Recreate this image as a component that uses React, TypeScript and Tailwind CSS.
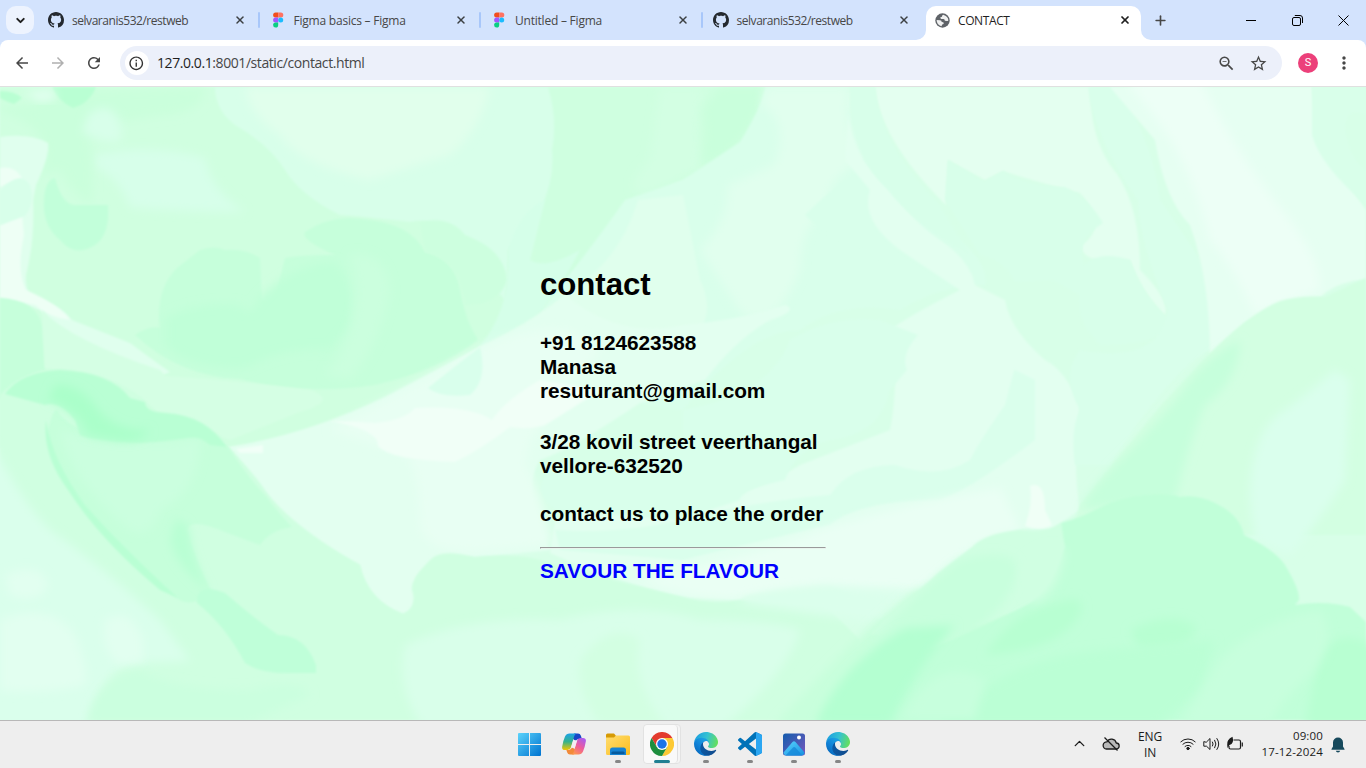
import React from "react";
import { MdArrowBack, MdArrowForward, MdRefresh, MdStarBorder, MdMoreVert, MdZoomOut, MdInfoOutline } from "react-icons/md";
import { ChevronDown, ChevronUp, Plus, X } from "lucide-react";

function GithubMark() {
  return (
    <svg viewBox="0 0 16 16" className="size-4" fill="#24292f">
      <path d="M8 0C3.58 0 0 3.58 0 8c0 3.54 2.29 6.53 5.47 7.59.4.07.55-.17.55-.38 0-.19-.01-.82-.01-1.49-2.01.37-2.53-.49-2.69-.94-.09-.23-.48-.94-.82-1.13-.28-.15-.68-.52-.01-.53.63-.01 1.08.58 1.23.82.72 1.21 1.87.87 2.33.66.07-.52.28-.87.51-1.07-1.78-.2-3.64-.89-3.64-3.95 0-.87.31-1.59.82-2.15-.08-.2-.36-1.02.08-2.12 0 0 .67-.21 2.2.82.64-.18 1.32-.27 2-.27s1.36.09 2 .27c1.53-1.04 2.2-.82 2.2-.82.44 1.1.16 1.92.08 2.12.51.56.82 1.27.82 2.15 0 3.07-1.87 3.75-3.65 3.95.29.25.54.73.54 1.48 0 1.07-.01 1.93-.01 2.2 0 .21.15.46.55.38A8.01 8.01 0 0 0 16 8c0-4.42-3.58-8-8-8z" />
    </svg>
  );
}

function FigmaMark() {
  return (
    <svg viewBox="0 0 16 16" className="size-4">
      <path d="M8.2 .5H5.6a2.5 2.5 0 0 0 0 5h2.6z" fill="#f24e1e" />
      <path d="M8.2 .5h2.6a2.5 2.5 0 0 1 0 5H8.2z" fill="#ff7262" />
      <path d="M8.2 5.5H5.6a2.5 2.5 0 0 0 0 5h2.6z" fill="#a259ff" />
      <circle cx="10.7" cy="8" r="2.5" fill="#1abcfe" />
      <path d="M5.6 10.5h2.6V13a2.55 2.55 0 1 1-2.6-2.5z" fill="#0acf83" />
    </svg>
  );
}

function GlobeMark() {
  return (
    <svg width="15" height="15" viewBox="0 0 15 15" className="ml-[8.5px]">
      <circle cx="7.500" cy="7.500" r="7.200" fill="#5f6368" />
      <path d="M8.200 1.700Q6.800 2.400 7 3.800L5.400 4.300Q5 5.700 6.300 5.900L8.500 6q1.400.3 1.300 1.800l1.900.3q1 .1 1.700-.7Q13.200 3.200 8.200 1.700z" fill="#fff" opacity=".9" />
      <path d="M1.600 7.100L5 7.300q1.800.3 1.700 1.700l1.500.3q.9.600.3 1.800l-1.300.4q-.2 1.200-.9 1.700Q1.800 12 1.600 7.100z" fill="#fff" opacity=".9" />
    </svg>
  );
}

const tabs = [
  { title: "selvaranis532/restweb", icon: "github" },
  { title: "Figma basics – Figma", icon: "figma" },
  { title: "Untitled – Figma", icon: "figma" },
  { title: "selvaranis532/restweb", icon: "github" },
];

function TabStrip() {
  return (
    <div className="flex h-10 bg-[#d3e3fd] text-[12px] text-[#474747]">
      <div className="mt-1.5 ml-1.5 flex size-7 items-center justify-center rounded-[10px] bg-[#edf3fe]">
        <ChevronDown size={13} strokeWidth={3.6} color="#1f1f1f" />
      </div>
      <div className="ml-[4px] flex">
        {tabs.map((t, i) => (
          <div key={i} className="relative flex w-[221.5px] items-center pl-2.5">
            {t.icon === "github" ? <GithubMark /> : <FigmaMark />}
            <span className={t.icon === "github" ? "mt-px ml-2 w-[160px] tracking-[-0.46px] whitespace-nowrap" : "mt-px ml-2 w-[160px] tracking-[-0.22px] whitespace-nowrap"}>{t.title}</span>
            <X size={12} strokeWidth={3} className="ml-[1.5px]" color="#3c4043" />
            {i < 3 && <span className="absolute top-3 right-0 h-4 w-[2px] rounded-full bg-[#a8c7fa]" />}
          </div>
        ))}
      </div>
      <div className="relative mt-1.5 ml-[2px] flex w-[215px] items-center rounded-t-[10px] bg-white pb-1.5 text-[#1f1f1f]">
        <svg className="absolute bottom-0 -left-2.5" width="10" height="10"><path d="M10 0v10H0A10 10 0 0 0 10 0z" fill="#fff" /></svg>
        <svg className="absolute -right-2.5 bottom-0" width="10" height="10"><path d="M0 0v10h10A10 10 0 0 1 0 0z" fill="#fff" /></svg>
        <GlobeMark />
        <span className="mt-px ml-[8.5px] w-[161px] tracking-[-0.4px]">CONTACT</span>
        <X size={12} strokeWidth={3.4} color="#1f1f1f" />
      </div>
      <Plus size={15} strokeWidth={2.6} className="mt-[12.5px] ml-[12px]" color="#474747" />
      <div className="mr-[17px] ml-auto flex items-center gap-[36px] text-black">
        <span className="h-px w-[10px] bg-black" />
        <svg width="11" height="11" viewBox="0 0 11 11" fill="none" stroke="black" className="-mr-px">
          <rect x="0.5" y="2.5" width="8" height="8" rx="1.5" />
          <path d="M2.8.5H8a2.5 2.5 0 0 1 2.5 2.5v5" />
        </svg>
        <svg width="11" height="11" viewBox="0 0 11 11" fill="none" stroke="black"><path d="M.5.5l10 10M10.5.5l-10 10" /></svg>
      </div>
    </div>
  );
}

function Toolbar() {
  return (
    <div className="h-[47px] bg-[#d3e3fd]">
      <div className="flex h-[47px] items-center rounded-t-[8px] border-b border-[#e0e0e0] bg-white text-[#474747]">
        <MdArrowBack size={18} className="ml-[13px]" />
        <MdArrowForward size={18} className="ml-[18px]" color="#b0b0b0" />
        <MdRefresh size={18} className="ml-[18px]" />
        <div className="ml-[17px] flex h-[34px] w-[1162px] items-center rounded-full bg-[#ecf0fa]">
          <div className="ml-[4.5px] flex size-6 items-center justify-center rounded-full bg-white">
            <MdInfoOutline size={16.500} color="#333" />
          </div>
          <span className="-mt-px ml-[8.5px] text-[14px] tracking-[-0.42px] text-[#474747]">
            <span className="text-[#1f1f1f]">127.0.0.1</span>:8001/static/contact.html
          </span>
          <MdZoomOut size={19} className="ml-auto" />
          <MdStarBorder size={19} className="mr-[14.5px] ml-[13px]" />
        </div>
        <div className="ml-4 flex size-5 items-center justify-center rounded-full bg-[#ec407a] font-['Roboto',sans-serif] text-[11px] text-white">S</div>
        <MdMoreVert size={20} className="ml-[16px]" />
      </div>
    </div>
  );
}

type Wash = [fill: string, d: string, soft?: boolean];

const washes: Wash[] = [
  ["#d0ffe0", "M0 87H560V390L230 448H0Z"],
  ["#d7ffea", "M95 155Q150 143 205 158Q210 190 245 212Q180 212 130 207Q120 178 95 167Z", true],
  ["#caffdc", "M0 105Q40 108 60 90L205 87Q205 110 170 115Q100 120 90 140Q95 190 90 205Q70 190 60 170L40 175Q60 130 0 112Z", true],
  ["#d8ffea", "M88 115Q105 100 118 117Q125 135 118 142Q100 142 82 133Z", true],
  ["#d8ffea", "M215 87H560V200Q530 215 508 250Q508 275 505 300L460 250Q440 215 410 222Q350 215 340 215Q300 195 285 170Q270 145 235 125Q215 110 215 87Z"],
  ["#e1ffec", "M245 87H490Q480 130 450 155Q400 170 370 180Q300 165 280 135Q250 115 245 87Z", true],
  ["#c6ffdb", "M177 268L200 250Q215 245 225 250Q245 248 260 258L262 300Q270 305 275 298L285 258Q300 255 335 255Q300 240 305 232Q330 215 360 219Q410 222 425 252Q455 258 460 290Q465 320 478 340Q440 370 375 385Q300 396 240 379Q180 377 135 335Q150 325 160 328Q155 290 177 268Z"],
  ["#cdffdf", "M420 222Q450 215 465 235Q505 250 507 280Q500 305 465 305Q460 260 425 252Z"],
  ["#c0ffd8", "M165 318Q200 300 240 305Q250 320 258 300Q290 265 335 262Q358 285 350 325L330 350Q290 345 245 368Q190 370 165 345Z", true],
  ["#cbffde", "M350 255Q385 250 390 290Q380 345 350 380L325 375Q370 320 350 255Z", true],
  ["#c2ffda", "M44 200Q45 180 55 178Q62 205 75 205L108 205Q110 235 95 245Q75 258 60 240Q42 225 44 200Z"],
  ["#b9ffd3", "M52 87H96Q90 103 73 108Q57 100 52 87Z M0 91Q15 91 22 98L14 104Q3 100 0 98Z"],
  ["#e2fff0", "M25 92L52 90L57 99L40 102Z", true],
  ["#e0ffee", "M0 137Q30 133 48 143Q50 155 36 185L33 200Q35 240 26 275Q25 295 35 298Q60 305 72 320L130 343Q150 358 170 372L163 375Q120 362 60 335L40 310Q20 302 0 298Z"],
  ["#eefff5", "M0 168Q15 165 22 178L0 187Z M0 225L22 215L24 235Q16 270 26 290Q60 305 70 320Q50 318 35 305L0 298Z"],
  ["#d8ffea", "M0 190Q20 170 30 185Q36 203 25 216L0 225Z"],
  ["#c6ffdb", "M0 298Q36 300 42 325L45 370Q20 375 5 395L0 400Z"],
  ["#d5ffe4", "M42 310Q70 340 160 370Q170 380 155 375Q230 380 310 390Q340 400 300 412L230 440L160 414Q120 375 45 368Z"],
  ["#cfffe0", "M548 87H766Q762 120 740 145Q720 165 683 180Q645 193 640 225Q600 240 570 275Q550 300 532 280Q537 240 540 210Q555 180 552 150Q558 120 548 87Z"],
  ["#d3ffe3", "M660 87H705Q690 130 705 165Q670 185 645 195Q620 190 650 160Z", true],
  ["#c9ffdc", "M720 87H766Q755 130 725 155L700 166Q709 130 702 110Z", true],
  ["#d5ffe9", "M545 200Q520 210 508 250Q512 310 478 348L530 325Q560 290 580 250Q545 270 530 260Z"],
  ["#d9ffeb", "M683 180L740 142Q760 110 766 87H848Q850 160 900 190Q940 225 946 230Q990 260 985 285Q940 285 900 310Q840 300 800 330Q750 330 683 410Q600 405 530 325Q590 250 625 200Z"],
  ["#e1ffee", "M766 87H850Q840 125 865 160Q820 180 830 210Q800 220 800 270Q770 340 740 310L700 250Q730 220 728 185L775 165Q790 120 762 105Z", true],
  ["#d9ffeb", "M805 215Q840 180 862 170Q870 205 880 225Q920 255 910 262Q880 265 860 245Q830 240 805 215Z"],
  ["#e0ffed", "M480 347Q535 320 567 293Q620 262 638 200L683 195L700 280Q720 320 683 350L560 400H390Z"],
  ["#e3fff0", "M228 447Q305 435 385 397L480 347Q530 325 565 295Q620 340 683 325Q740 320 785 305Q800 310 770 320Q735 340 705 380L640 403Q570 450 540 460Q520 490 550 550L490 556Q420 560 415 580Q418 608 403 614Q365 600 360 565Q320 545 290 525Z"],
  ["#e8fff3", "M480 348Q560 310 600 350L560 400L530 440L525 465Q545 500 552 545L470 552Q420 550 420 520Q420 460 400 452L330 430Z", true],
  ["#d9ffec", "M480 347Q488 380 470 395Q440 398 428 388Q450 370 480 347Z"],
  ["#f1fff7", "M330 421Q355 421 375 423Q405 420 415 408Q470 405 492 420Q505 400 540 380L600 390Q570 410 545 425Q530 430 510 427Q480 450 455 462Q390 460 378 446Q380 430 330 421Z M236 449L263 445V453L240 453Z"],
  ["#e3fff0", "M850 87Q842 120 863 160Q910 220 940 240Q970 260 975 285L1005 300Q1010 330 1045 360Q1065 370 1080 405Q1072 465 1080 510L1050 530Q1000 520 960 565L925 600L880 620Q850 590 825 583Q745 590 740 600L683 597Q610 580 550 553L555 520Q620 490 683 510Q760 490 800 465L890 430Q900 380 890 330Q910 315 960 290L900 250Q860 220 870 190L845 160Z"],
  ["#d9ffeb", "M683 410Q770 395 790 340Q830 315 880 320L918 335Q900 355 907 370L890 390Q880 435 830 440Q795 450 785 480Q740 490 740 500L680 520L555 510Q530 490 550 470Q620 465 683 440Z"],
  ["#daffec", "M555 530Q630 535 700 515Q770 500 830 495Q850 465 895 465Q940 480 970 460Q980 440 1005 405Q1015 365 1015 370L1035 380V440Q970 490 940 500Q860 500 830 525Q720 550 683 560L560 550Z"],
  ["#eafff4", "M820 530Q920 500 1000 488L1020 530Q985 535 955 560L920 590Q830 585 735 598Q680 597 640 580Q760 555 820 530Z", true],
  ["#f0fff6", "M1030 486Q1045 480 1045 510L1052 525Q1040 532 1025 526Q1033 505 1030 486Z"],
  ["#e4fff0", "M875 87H1090Q1090 135 1110 165Q1140 200 1140 270Q1170 300 1165 315Q1140 290 1130 260Q1080 265 1082 245Q1110 225 1080 193Q1030 180 1003 171L985 180L948 160L946 205Q880 140 875 87Z"],
  ["#d8ffea", "M948 160L984 182L1003 171Q1020 185 1065 187Q1090 200 1103 223Q1075 240 1084 265Q1100 250 1130 260Q1145 300 1168 318Q1170 345 1100 345Q1075 320 1080 295L1053 280L1015 282Q1005 260 980 255L945 200Z"],
  ["#d8ffea", "M850 87H875Q880 145 940 205L970 255Q910 220 890 190Q850 160 850 87Z"],
  ["#d9ffeb", "M1088 87H1120Q1155 150 1160 200L1200 260Q1212 300 1210 350Q1170 370 1110 465H1075Q1070 430 1080 410Q1060 375 1080 350Q1160 365 1168 310Q1140 245 1138 200Q1095 140 1088 87Z"],
  ["#e6fff2", "M1110 87H1312Q1315 140 1366 210V280Q1340 280 1320 297Q1290 300 1245 323L1210 357Q1210 280 1190 225Q1165 200 1155 140Z"],
  ["#d9ffea", "M1312 87H1366V115Q1345 105 1345 130Q1350 160 1366 170V205Q1320 165 1312 135Z"],
  ["#edfff6", "M1130 80H1200Q1240 160 1290 220Q1320 260 1320 290L1255 315Q1230 260 1210 240Q1190 150 1130 87Z", true],
  ["#d3ffe2", "M1366 278Q1350 285 1325 297Q1300 295 1280 301Q1250 313 1210 353Q1185 380 1163 403Q1120 455 1080 505L1070 535H1366Z"],
  ["#c6ffdc", "M1240 340Q1210 355 1190 380Q1170 410 1120 460Q1090 490 1080 510L1175 500Q1190 440 1205 405Q1240 380 1240 340Z", true],
  ["#daffed", "M1335 370Q1300 400 1285 410Q1250 430 1250 500L1255 540L1290 555Q1320 520 1345 480L1350 380Z", true],
  ["#d0ffe1", "M0 395Q20 372 60 369Q110 372 145 400Q150 412 165 413Q205 415 228 446Q255 475 265 490Q290 525 360 565Q368 600 403 614Q418 608 412 590Q410 580 430 560Q440 548 475 557Q520 552 550 563Q610 580 683 597Q710 605 740 600Q770 605 825 605L860 640L810 720H0Z"],
  ["#dbffec", "M740 600Q770 590 825 585Q870 590 910 590L875 622Q820 615 740 603Z", true],
  ["#d9ffea", "M405 645Q470 615 560 620Q640 600 700 620Q770 620 800 630Q790 670 720 730H425Q395 690 405 645Z", true],
  ["#d3ffe2", "M580 660Q610 620 640 640Q630 680 665 725H600Q575 690 580 660Z", true],
  ["#daffec", "M-10 440Q20 500 50 530Q100 565 160 620L190 661L135 663Q105 665 85 730H-10Z", true],
  ["#e2fff0", "M0 620Q50 600 75 635Q90 675 85 685Q40 695 0 690Z M105 620Q130 605 143 640V662L120 665Q100 650 105 620Z M5 575Q40 560 48 585Q40 605 10 595Z", true],
  ["#c6ffdb", "M48 430Q55 400 60 415Q85 440 140 442L195 437Q215 440 228 447Q250 480 265 495Q280 515 292 527Q270 530 260 545L225 532Q190 517 187 530Q195 560 212 592Q190 610 175 597Q110 550 80 500Q50 470 48 430Z"],
  ["#cbffdf", "M60 430Q100 445 200 440Q200 490 160 510Q150 540 130 530Q70 480 60 430Z", true],
  ["#b9ffd4", "M5 394Q20 372 60 370Q110 372 130 398L145 402Q145 412 165 413Q205 415 227 447L210 445Q200 436 190 438Q160 442 140 443Q90 440 80 435L75 420Q60 400 45 405Z"],
  ["#abffca", "M55 385Q80 382 100 412Q120 432 150 430Q140 445 110 439L88 435L80 420Q60 402 48 400Z", true],
  ["#b9ffd4", "M46 420Q52 460 85 505Q120 545 178 598L160 590Q100 540 68 490Q42 455 46 420Z"],
  ["#b9ffd4", "M175 520Q190 520 190 540Q195 570 210 592Q175 565 170 540Z", true],
  ["#bfffd9", "M197 598Q200 583 225 593Q250 615 278 635Q305 635 316 665V673L285 673Q260 673 245 663Q225 625 197 603Z"],
  ["#cbffdf", "M88 722Q95 680 140 670Q170 690 250 690Q300 677 310 695L250 722Z", true],
  ["#c8ffdc", "M775 725Q850 640 915 590L1060 600V725Z", true],
  ["#d0ffe2", "M883 620Q920 590 938 573Q955 560 972 547Q985 533 1020 530Q1045 534 1061 523L1075 560L1045 600L980 625Q920 635 870 635Z"],
  ["#c8ffdd", "M870 640Q920 590 960 560Q1015 545 1018 570Q1010 610 960 640Q900 650 860 680Z", true],
  ["#c1ffd9", "M1061 523Q1080 518 1099 508Q1120 497 1146 495Q1170 493 1180 497Q1197 494 1215 503Q1240 515 1244 535Q1275 550 1285 565Q1300 590 1299 600L1295 605Q1325 600 1350 607L1366 622V720H860Q880 680 905 660Q1000 620 1023 607Q1050 595 1065 547Z"],
  ["#b4ffd1", "M815 725Q840 665 905 628L955 625Q915 670 890 725Z", true],
  ["#b8ffd2", "M985 655Q1010 615 1050 605Q1090 590 1080 615Q1060 650 985 655Z M1130 630Q1170 610 1195 625Q1200 650 1140 650Z M1320 650Q1350 625 1375 650V725H1305Z", true],
  ["#bbffd5", "M940 725Q1000 660 1100 650L1215 640L1200 690L1160 725Z", true],
  ["#c7ffdd", "M920 690Q950 660 985 680L975 720H900Z M1220 660Q1260 620 1320 610Q1340 640 1310 675Q1280 700 1270 725H1180Z", true],
  ["#d0ffe2", "M1020 565Q1045 540 1065 550Q1060 590 1035 603Q1020 595 1020 565Z", true],
];

function WatercolorBackdrop() {
  return (
    <svg className="absolute inset-0" width="1366" height="633" viewBox="0 87 1366 633">
      <defs>
        <filter id="crisp"><feGaussianBlur stdDeviation="1" /></filter>
        <filter id="soft" x="-20%" y="-20%" width="140%" height="140%"><feGaussianBlur stdDeviation="5" /></filter>
      </defs>
      <rect y="87" width="1366" height="633" fill="#d8ffe8" />
      {washes.map(([fill, d, soft], i) => <path key={i} fill={fill} d={d} filter={soft ? "url(#soft)" : "url(#crisp)"} />)}
    </svg>
  );
}

function ContactPage() {
  return (
    <main className="relative flex h-[633px] justify-center overflow-hidden">
      <WatercolorBackdrop />
      <div className="relative w-[286px] pt-[180px] text-[20.8px] leading-[24px] font-bold tracking-[-0.035px] whitespace-nowrap text-black">
        <h1 className="text-[31.2px] leading-[36px]">contact</h1>
        <p className="mt-[28px]">+91 8124623588<br />Manasa<br />resuturant@gmail.com</p>
        <p className="mt-[27px]">3/28 kovil street veerthangal<br />vellore-632520</p>
        <p className="mt-[24px]">contact us to place the order</p>
        <hr className="mt-[21px] h-[2px] border-t border-r border-b border-l border-t-[#9a9a9a] border-r-[#eee] border-b-[#e9f5ee] border-l-[#9a9a9a]" />
        <p className="mt-[10px] text-[#0000ff]">SAVOUR THE FLAVOUR</p>
      </div>
    </main>
  );
}

function WindowsLogo() {
  return (
    <svg width="24" height="24" viewBox="0 0 24 24">
      <defs><linearGradient id="win" x1="0" y1="0" x2="1" y2="1"><stop stopColor="#5bd3fb" /><stop offset="1" stopColor="#0073d0" /></linearGradient></defs>
      <path fill="url(#win)" d="M0 2Q0 1 1 1H11V12H0zM12 1H22Q23 1 23 2V12H12zM0 13H11V24H1Q0 24 0 23zM12 13H23V23Q23 24 22 24H12z" />
    </svg>
  );
}

function CopilotLogo() {
  return (
    <svg width="24" height="24" viewBox="0 0 24 24">
      <defs>
        <linearGradient id="cp1" x1="0" y1="0" x2="0" y2="1"><stop stopColor="#1da2e8" /><stop offset=".5" stopColor="#35b28c" /><stop offset="1" stopColor="#f2c500" /></linearGradient>
        <linearGradient id="cp2" x1=".8" y1="0" x2=".2" y2="1"><stop stopColor="#a95cf0" /><stop offset=".5" stopColor="#ee5c9b" /><stop offset="1" stopColor="#ff9a4b" /></linearGradient>
      </defs>
      <path d="M12 1.5h4q2.2 0 2.9 2.2l1 3.3h-3q-2.3 0-3 2.2L10 6z" fill="#1746c8" />
      <path d="M7.5 1.5h7q-1.7.7-2.3 2.7L9 15.2q-.8 2.8-3.4 2.8H3Q-.4 18 .2 14.400Q1 9 3 4.500 4.300 1.500 7.500 1.500z" fill="url(#cp1)" />
      <path d="M12 22.500H8q-2.200 0-2.900-2.200L4.400 18h2.400q2.400 0 3.200-2.800L14 18z" fill="#f28a39" />
      <path d="M16.500 22.500h-7q1.700-.7 2.300-2.700L15 8.800Q15.800 6 18.400 6H21q3.400 0 2.800 3.600-.8 5.400-2.800 9.900-1.300 3-4.500 3z" fill="url(#cp2)" />
      <path d="M11.200 8.200h3.900l-2.300 7.600H9z" fill="#f5edf4" />
    </svg>
  );
}

function FolderLogo() {
  return (
    <svg width="24" height="24" viewBox="0 0 24 24">
      <defs><linearGradient id="fold" x1="0" y1="0" x2="1" y2="1"><stop stopColor="#ffdd70" /><stop offset="1" stopColor="#fbbd1e" /></linearGradient></defs>
      <path d="M0 3Q0 1.500 1.500 1.500H8l2 2.200V7H0z" fill="#d69a05" />
      <path d="M0 5.500h8l2-2h12.500Q24 3.500 24 5v17Q24 23 22.500 23h-21Q0 23 0 21.500z" fill="url(#fold)" />
      <path d="M4 23v-5q0-2.500 2.500-2.500h11Q20 15.500 20 18v5z" fill="#1683d2" />
      <path d="M7 19.500h10q1 0 1.500 1V22H5.500v-1.500q.5-1 1.500-1z" fill="#075b9d" />
    </svg>
  );
}

function ChromeLogo() {
  return (
    <svg width="24" height="24" viewBox="0 0 48 48">
      <path d="M3.200 12A24 24 0 0 1 44.800 12H24L13.600 30z" fill="#e33b2e" />
      <path d="M44.800 12A24 24 0 0 1 24 48L34.400 30 24 12z" fill="#fcc934" />
      <path d="M3.200 12A24 24 0 0 0 24 48L34.400 30H13.600z" fill="#1e8e3e" />
      <circle cx="24" cy="24" r="12" fill="#fff" />
      <circle cx="24" cy="24" r="9.500" fill="#1a73e8" />
    </svg>
  );
}

function EdgeLogo() {
  return (
    <svg width="24" height="24" viewBox="0 0 256 256">
      <defs>
        <linearGradient id="edge1" x1="0" y1=".5" x2="1" y2=".5"><stop stopColor="#0c59a4" /><stop offset="1" stopColor="#114a8b" /></linearGradient>
        <linearGradient id="edge2" x1=".7" y1=".2" x2=".2" y2=".9"><stop stopColor="#1b9de2" /><stop offset=".5" stopColor="#1182d7" /><stop offset="1" stopColor="#0669bd" /></linearGradient>
        <linearGradient id="edge3" x1="0" y1=".4" x2="1" y2=".6"><stop stopColor="#1b9fe0" /><stop offset=".5" stopColor="#35c1d2" /><stop offset="1" stopColor="#66e05a" /></linearGradient>
      </defs>
      <path d="M231 190.500c-3.400 1.800-6.900 3.400-10.500 4.700-11.500 4.300-23.700 6.500-36 6.500-47.400 0-88.700-32.600-88.700-74.500.1-11.400 6.400-21.900 16.400-27.300-42.900 1.800-53.900 46.500-53.900 72.700 0 74.100 68.300 81.600 83 81.600 7.900 0 19.800-2.300 27-4.600l1.300-.4c27.600-9.500 51.100-28.100 66.600-52.800 1.200-1.900.6-4.300-1.200-5.500-1.300-.8-2.700-.9-4-.4z" fill="url(#edge1)" />
      <path d="M105.700 241.400c-8.900-5.500-16.600-12.800-22.700-21.300-26.300-36-18.400-86.500 17.600-112.800 3.800-2.700 7.700-5.200 11.900-7.200 3.100-1.500 8.400-4.100 15.500-4 10.100.1 19.600 4.900 25.700 13 4 5.400 6.300 11.900 6.400 18.700 0-.2 24.500-79.600-80-79.600-43.900 0-80 41.700-80 78.200-.2 19.300 4 38.500 12.100 56 27.600 58.800 94.800 87.600 156.400 67.100-21.100 6.600-44.100 3.700-62.900-8.100z" fill="url(#edge2)" />
      <path d="M152.300 148.900c-.8 1-3.300 2.500-3.300 5.700 0 2.600 1.700 5.100 4.700 7.200 14.400 10 41.500 8.700 41.600 8.700 10.700 0 21.100-2.900 30.300-8.300 18.800-11 30.400-31.100 30.400-52.900.3-22.400-8-37.300-11.300-43.900C223.500 23.900 177.700 0 128 0 58 0 1 56.200 0 126.200c.5-36.500 36.800-66 80-66 3.500 0 23.500.3 42 10.100 16.300 8.600 24.900 18.900 30.800 29.200 6.200 10.700 7.300 24.100 7.300 29.500 0 5.300-2.700 13.300-7.800 19.900z" fill="url(#edge3)" />
    </svg>
  );
}

function CodeLogo() {
  return (
    <svg width="24" height="24" viewBox="0 0 24 24">
      <path fill="#0072b8" d="M23.150 2.587L18.210.21a1.494 1.494 0 0 0-1.705.29l-9.460 8.630-4.120-3.128a.999.999 0 0 0-1.276.057L.327 7.261A1 1 0 0 0 .326 8.740L3.899 12 .326 15.260a1 1 0 0 0 .001 1.479L1.650 17.940a.999.999 0 0 0 1.276.057l4.120-3.128 9.460 8.630a1.492 1.492 0 0 0 1.704.29l4.942-2.377A1.500 1.500 0 0 0 24 20.060V3.939a1.500 1.500 0 0 0-.85-1.352zm-5.146 14.861L10.826 12l7.178-5.448v10.896z" />
      <path fill="#2aa6f2" d="M18 .1l5.150 2.487A1.500 1.500 0 0 1 24 3.939V20.060a1.500 1.500 0 0 1-.85 1.356L18 23.900z" />
    </svg>
  );
}

function PhotosLogo() {
  return (
    <svg width="24" height="24" viewBox="0 0 24 24">
      <defs>
        <linearGradient id="ph1" x1="0" y1="0" x2="1" y2="1"><stop stopColor="#135cad" /><stop offset="1" stopColor="#7658bd" /></linearGradient>
        <linearGradient id="ph2" x1="0" y1="0" x2="1" y2="1"><stop stopColor="#59d5ff" /><stop offset="1" stopColor="#168fe0" /></linearGradient>
      </defs>
      <rect x="1" y="1.500" width="22" height="22" rx="2.500" fill="url(#ph1)" />
      <path d="M1.500 20.500l9-10.500q1.500-1.500 3 0l9 10.500q-.5 3-3 3h-15q-2.500 0-3-3z" fill="url(#ph2)" />
      <path d="M3.500 23.500l7.500-8q1.200-1 2.300 0l7.200 8z" fill="#1687d8" opacity=".75" />
      <circle cx="17" cy="5.500" r="2" fill="#fff" />
    </svg>
  );
}

const apps = [
  { Logo: WindowsLogo, open: false, active: false },
  { Logo: CopilotLogo, open: false, active: false },
  { Logo: FolderLogo, open: true, active: false },
  { Logo: ChromeLogo, open: true, active: true },
  { Logo: EdgeLogo, open: true, active: false },
  { Logo: CodeLogo, open: true, active: false },
  { Logo: PhotosLogo, open: true, active: false },
  { Logo: EdgeLogo, open: true, active: false },
];

function Taskbar() {
  return (
    <footer className="flex h-12 border-t border-[#b8b8b8] bg-[#eeeeee] text-[11px] text-[#1b1b1b]">
      <div className="ml-[508px] flex pt-[3px]">
        {apps.map(({ Logo, open, active }, i) => (
          <div key={i} className="relative flex h-10 w-11 flex-col items-center pt-[8px]">
            {active && <span className="absolute top-0 left-[3px] h-[40px] w-[38px] rounded-[4px] border border-[#e2e2e2] bg-[#f5f5f5]"><span className="block h-full w-[34px] rounded-[4px] border-r border-[#e0e0e0] bg-[#f9f9f9]" /></span>}
            <span className="relative size-6"><Logo /></span>
            {open && <span className={active ? "relative mt-[4px] h-[3px] w-4 rounded-full bg-[#1f7f92]" : "relative mt-[4px] h-[3px] w-1.5 rounded-full bg-[#868686]"} />}
          </div>
        ))}
      </div>
      <div className="mr-[21px] ml-auto flex items-center">
        <ChevronUp size={17} strokeWidth={1.900} className="mt-[-2px] mr-[14px]" />
        <svg width="18" height="16" viewBox="0 0 18 16" fill="none" stroke="#1b1b1b" className="-mt-px mr-[17px]">
          <path d="M4.500 13h9.500a3 3 0 0 0 .3-6A5 5 0 0 0 5 5.800 3.600 3.600 0 0 0 4.500 13z" fill="#b9b9b9" strokeWidth="1.300" />
          <path d="M2.500 1.500l13 13" strokeWidth="1.300" />
        </svg>
        <div className="mr-[17px] w-[26px] text-center text-[12px] leading-4 tracking-[-0.15px]">ENG<br />IN</div>
        <svg width="16" height="16" viewBox="0 0 16 16" fill="none" stroke="#1b1b1b" strokeLinecap="round" className="-mt-px mr-[7px]">
          <path d="M.8 5.800a10.200 10.200 0 0 1 14.400 0M2.900 8.200a7.200 7.200 0 0 1 10.200 0M5 10.500a4.300 4.300 0 0 1 6 0" />
          <circle cx="8" cy="12.500" r="1.200" fill="#1b1b1b" />
        </svg>
        <svg width="17" height="16" viewBox="0 0 17 16" fill="none" stroke="#1b1b1b" strokeLinecap="round" strokeLinejoin="round" className="-mt-px mr-[6px]">
          <path d="M.8 6v4.200h2.700L7 13.500v-11L3.500 6zM9.500 6q1.300 2 0 4M11.700 4.200q2.600 3.800 0 7.600M13.900 2.500q3.800 5.500 0 11" />
        </svg>
        <svg width="18" height="16" viewBox="0 0 18 16" fill="none" stroke="#1b1b1b" className="mt-[-2px] mr-[15px]">
          <path d="M7.500 4H13q1.500 0 1.500 1.500v6Q14.500 13 13 13H4.500Q3 13 3 11.500V10M16.300 6.500v4" strokeWidth="1.200" />
          <path d="M1.200 9Q.5 3.500 6.500.8 8.500 7.500 3.500 9L1.500 12z" fill="#1b1b1b" stroke="none" />
        </svg>
        <div className="-mt-px w-[64px] text-right text-[11.500px] leading-4 tracking-[0.15px] whitespace-nowrap">09:00<br />17-12-2024</div>
        <svg width="14" height="16" viewBox="0 0 14 16" fill="#17495c" className="ml-[8px]">
          <path d="M7 .5a5 5 0 0 1 5 5V9.500L13.500 12v.7H.5V12L2 9.500v-4a5 5 0 0 1 5-5zM4.800 13.700h4.400q-.5 1.800-2.200 1.800t-2.200-1.800z" />
        </svg>
      </div>
    </footer>
  );
}

export default function App() {
  return (
    <div className="flex h-[768px] w-[1366px] flex-col overflow-hidden bg-white">
      <div className="font-['Open_Sans','Noto_Sans',sans-serif]"><TabStrip /><Toolbar /></div>
      <div className="font-['Liberation_Sans',Arial,sans-serif]"><ContactPage /></div>
      <div className="font-['Open_Sans','Noto_Sans',sans-serif]"><Taskbar /></div>
    </div>
  );
}
